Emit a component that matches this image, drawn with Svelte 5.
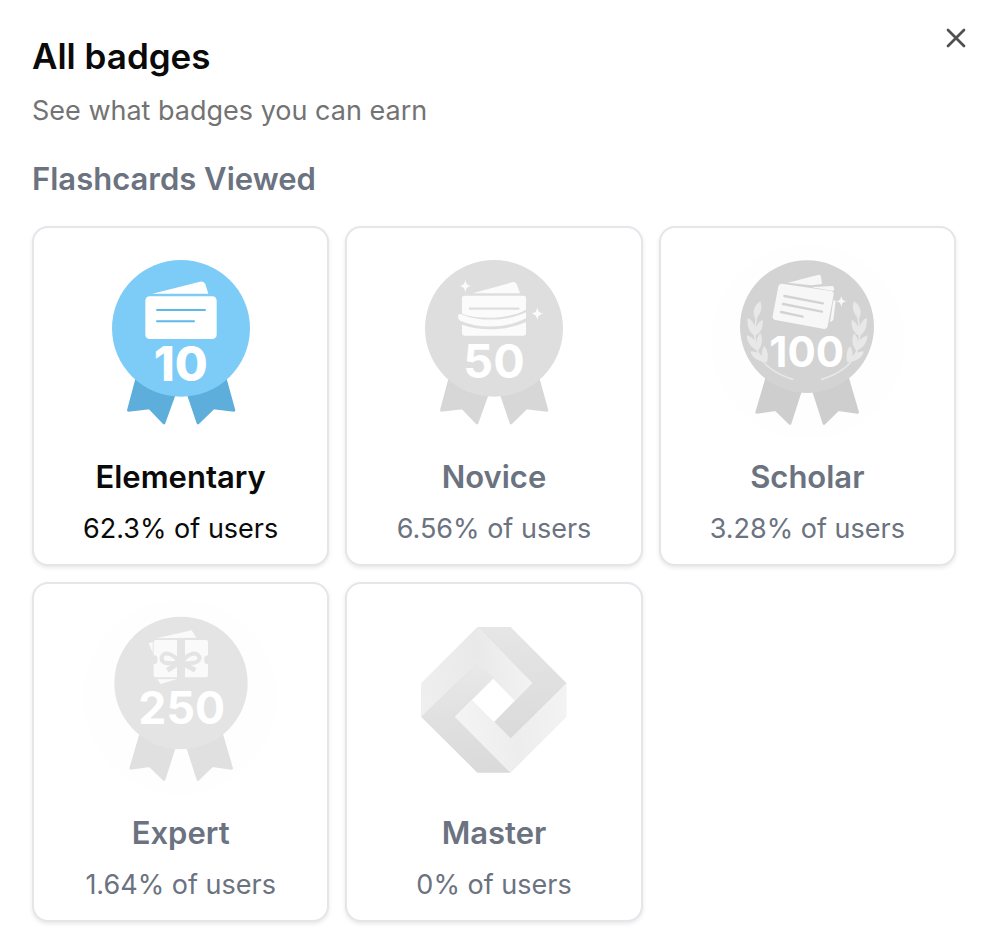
<script>
  const badges = [
    { id: 'elementary', name: 'Elementary', share: '62.3%', earned: true, viewBox: '3 0 600 600' },
    { id: 'novice', name: 'Novice', share: '6.56%', earned: false, viewBox: '0 0 600 600' },
    { id: 'scholar', name: 'Scholar', share: '3.28%', earned: false, viewBox: '-3 0 600 600' },
    { id: 'expert', name: 'Expert', share: '1.64%', earned: false, viewBox: '3 0 600 600' },
    { id: 'master', name: 'Master', share: '0%', earned: false, viewBox: '0 0 600 600' }
  ];
  let open = $state(true);
</script>

{#snippet ribbon(fill)}
  <g {fill} stroke={fill} stroke-width="8" stroke-linejoin="round">
    <path d="M172 410 145 511 209 504 252 549 286 455Z" />
    <path d="M434 410 462 511 400 504 354 549 322 455Z" />
  </g>
{/snippet}

{#snippet slimRibbon(fill)}
  <g {fill} stroke={fill} stroke-width="8" stroke-linejoin="round">
    <path d="M179 405 146 517 203 509 246 551 280 445Z" />
    <path d="M416 405 449 517 391 509 348 551 314 445Z" />
  </g>
{/snippet}

{#snippet sparkle(x, y, s)}
  <path
    transform="translate({x} {y}) scale({s})"
    d="M0-19C3-5 5-3 18 0C5 3 3 5 0 19C-3 5-5 3-18 0C-5-3-3-5 0-19Z"
  />
{/snippet}

{#snippet laurel()}
  <path d="M254 418C210 404 176 385 157 352C141 322 136 277 146 230" fill="none" stroke="#e8e8e8" stroke-width="5" stroke-linecap="round" />
  <path d="M157 184C137 196 132 218 142 237C158 223 165 204 157 184Z" />
  <path d="M119 233C117 257 122 276 140 287C144 264 139 244 119 233Z" />
  <path d="M164 239C147 248 138 267 139 288C158 280 166 263 164 239Z" />
  <path d="M116 286C118 309 130 325 150 332C149 310 139 293 116 286Z" />
  <path d="M157 279C145 292 141 313 150 332C162 318 166 299 157 279Z" />
  <path d="M127 334C132 353 149 365 174 366C167 347 151 335 127 334Z" />
  <path d="M169 318C158 333 159 353 176 368C182 352 181 334 169 318Z" />
{/snippet}

{#snippet art(id, viewBox)}
  <svg class="art" {viewBox} aria-hidden="true">
    {#if id === 'elementary'}
      {@render ribbon('#5eaedb')}
      <ellipse cx="303" cy="265" rx="207" ry="205" fill="#7dccf7" />
      <g fill="#fff">
        <path d="M217 161 360 125Q371 122 376 132L385 161Z" />
        <rect x="196" y="169" width="214" height="128" rx="13" />
      </g>
      <path d="M231 210H375M231 244H342" stroke="#5eb9e8" stroke-width="6" stroke-linecap="round" />
      <text class="heavy" x="302" y="424" font-size="143">10</text>
    {:else if id === 'novice'}
      <g transform="translate(-3 0)">{@render ribbon('#d7d7d7')}</g>
      <ellipse cx="300" cy="265" rx="207" ry="205" fill="#dedede" />
      <g fill="#fbfbfb">
        <path d="M236 160 354 127Q365 123 369 134L378 160Z" />
        <path d="M211 167H389Q396 167 396 174V209C348 235 267 242 204 222V174Q204 167 211 167Z" />
        <path d="M193 225Q197 219 204 224C265 247 344 242 396 217V235C338 266 258 267 198 242Q190 235 193 225Z" />
        <path d="M204 254C263 275 338 272 396 246V280Q396 287 389 287H211Q204 287 204 280Z" />
        {@render sparkle(214, 138, 1)}
        {@render sparkle(430, 221, 1)}
      </g>
      <path d="M225 206H376" stroke="#dedede" stroke-width="7" />
      <text x="300" y="415" font-size="140">50</text>
    {:else if id === 'scholar'}
      <circle cx="300" cy="304" r="290" fill="#fefefe" />
      {@render slimRibbon('#cecece')}
      <ellipse cx="297" cy="260" rx="201" ry="199" fill="#d3d3d3" />
      <g fill="#e8e8e8">
        {@render laurel()}
        <g transform="translate(595 0) scale(-1 1)">{@render laurel()}</g>
      </g>
      <g fill="#f7f7f7">
        <path d="M240 128 329 105Q337 102 339 110L342 132 310 136Z" />
        <path d="M310 142 372 138Q378 138 378 145L377 153Z" />
        <path d="M376 181 383 182 376 240 366 247Z" />
        <path d="M222 131 369 153Q378 155 377 163L359 259Q357 268 349 267L202 240Q193 238 194 229L211 139Q213 130 222 131Z" />
        {@render sparkle(400, 184, 0.9)}
      </g>
      <path d="M229 168 345 190M225 192 342 215M219 216 284 230" stroke="#d3d3d3" stroke-width="7" stroke-linecap="round" />
      <text x="296" y="380" font-size="126">100</text>
    {:else if id === 'expert'}
      <circle cx="300" cy="304" r="290" fill="#fefefe" />
      <g transform="translate(6 0)">{@render slimRibbon('#e0e0e0')}</g>
      <ellipse cx="303" cy="261" rx="200" ry="199" fill="#e4e4e4" />
      <g fill="#fafafa">
        <path d="M230 127 335 103 349 125Z" />
        <path d="M206 142 218 138V170Z" />
        <path d="M232 250 291 249 242 264Z" />
        <path d="M227 132H291V244H229Q221 244 221 236V205Q230 205 232 198V183Q229 177 221 178V139Q221 132 227 132Z" />
        <path d="M315 132H378Q384 132 384 139V178Q376 177 373 183V198Q376 205 384 205V238Q384 244 378 244H315Z" />
      </g>
      <g fill="none" stroke="#e4e4e4" stroke-width="12" stroke-linejoin="round">
        <path d="M298 201C281 171 251 163 245 184C242 207 272 201 298 201C329 202 359 205 359 184C351 162 318 174 305 201" />
        <path d="M292 203 262 223M310 203 346 223" stroke-width="15" />
      </g>
      <text x="305" y="385" font-size="134">250</text>
    {:else}
      <defs>
        <linearGradient id="fold-top" x1="81" y1="300" x2="415" y2="250" gradientUnits="userSpaceOnUse">
          <stop offset="0" stop-color="#efefef" />
          <stop offset="0.55" stop-color="#e9e9e9" />
          <stop offset="1" stop-color="#f3f3f3" />
        </linearGradient>
        <linearGradient id="fold-right" x1="330" y1="81" x2="350" y2="416" gradientUnits="userSpaceOnUse">
          <stop offset="0" stop-color="#e6e6e6" />
          <stop offset="0.4" stop-color="#e1e1e1" />
          <stop offset="1" stop-color="#dadada" />
        </linearGradient>
        <linearGradient id="fold-left" x1="240" y1="190" x2="260" y2="518" gradientUnits="userSpaceOnUse">
          <stop offset="0" stop-color="#e9e9e9" />
          <stop offset="0.5" stop-color="#e0e0e0" />
          <stop offset="1" stop-color="#dadada" />
        </linearGradient>
        <linearGradient id="fold-bottom" x1="190" y1="350" x2="518" y2="300" gradientUnits="userSpaceOnUse">
          <stop offset="0" stop-color="#f4f4f4" />
          <stop offset="0.5" stop-color="#ededed" />
          <stop offset="1" stop-color="#f3f3f3" />
        </linearGradient>
      </defs>
      <g transform="translate(0 12)">
        <path fill="url(#fold-top)" d="M250 81 415 249 362 302 248 185 81 350V250Z" />
        <path fill="url(#fold-right)" d="M250 81H350L518 250 350 416 300 366 415 249Z" />
        <path fill="url(#fold-left)" d="M81 350 248 185 300 234 183 350 350 518H250Z" />
        <path fill="url(#fold-bottom)" d="M518 250V350L350 518 183 350 234 300 350 416Z" />
      </g>
    {/if}
  </svg>
{/snippet}

{#if open}
  <main class="dialog">
    <header>
      <div class="heading">
        <h1>All badges</h1>
        <p>See what badges you can earn</p>
      </div>
      <button class="close" type="button" aria-label="Close" onclick={() => (open = false)}>
        <svg viewBox="0 0 32 32" aria-hidden="true">
          <path d="M8 8 24 24M24 8 8 24" />
        </svg>
      </button>
    </header>

    <section>
      <h2>Flashcards Viewed</h2>
      <ul class="grid">
        {#each badges as badge (badge.id)}
          <li class="card" class:earned={badge.earned}>
            {@render art(badge.id, badge.viewBox)}
            <h3>{badge.name}</h3>
            <p>{badge.share} of users</p>
          </li>
        {/each}
      </ul>
    </section>
  </main>
{/if}

<style>
  :global(body) {
    background: #fff;
  }

  .dialog {
    font-family: Inter, 'Liberation Sans', sans-serif;
    color: #0a0a0a;
  }

  h1,
  h2,
  h3,
  p,
  ul {
    margin: 0;
    padding: 0;
    font-weight: 400;
  }

  header {
    display: flex;
    justify-content: space-between;
    align-items: flex-start;
    padding: 22px 20px 0 32px;
  }

  .heading {
    padding-top: 10px;
  }

  h1 {
    font-size: 35px;
    line-height: 48px;
    font-weight: 600;
  }

  .heading p {
    margin-top: 11px;
    font-size: 27px;
    line-height: 40px;
    color: #737373;
  }

  .close {
    width: 32px;
    height: 32px;
    padding: 0;
    border: 0;
    border-radius: 4px;
    background: none;
    cursor: pointer;
  }

  .close svg {
    display: block;
    width: 32px;
    height: 32px;
    fill: none;
    stroke: #505050;
    stroke-width: 2.7;
    stroke-linecap: round;
  }

  section {
    padding: 24px 36px 20px 32px;
  }

  h2 {
    font-size: 31px;
    line-height: 48px;
    font-weight: 600;
    color: #6b7280;
  }

  .grid {
    display: grid;
    grid-template-columns: repeat(3, minmax(0, 1fr));
    gap: 16px;
    margin-top: 23px;
    list-style: none;
  }

  .card {
    display: flex;
    flex-direction: column;
    align-items: center;
    padding: 12px 12px 15px;
    border: 2px solid #e5e5ea;
    border-radius: 16px;
    background: #fff;
    box-shadow: 0 2px 4px rgb(0 0 0 / 9%);
    color: #6b7280;
    text-align: center;
  }

  .card.earned {
    color: #0a0a0a;
  }

  .art {
    display: block;
    width: 200px;
    height: 200px;
  }

  .art text {
    fill: #fff;
    font-weight: 700;
    text-anchor: middle;
  }

  .art .heavy {
    font-weight: 800;
  }

  .card h3 {
    margin-top: 13px;
    font-size: 31px;
    line-height: 48px;
    font-weight: 600;
  }

  .card p {
    margin-top: 8px;
    font-size: 27px;
    line-height: 40px;
  }
</style>
